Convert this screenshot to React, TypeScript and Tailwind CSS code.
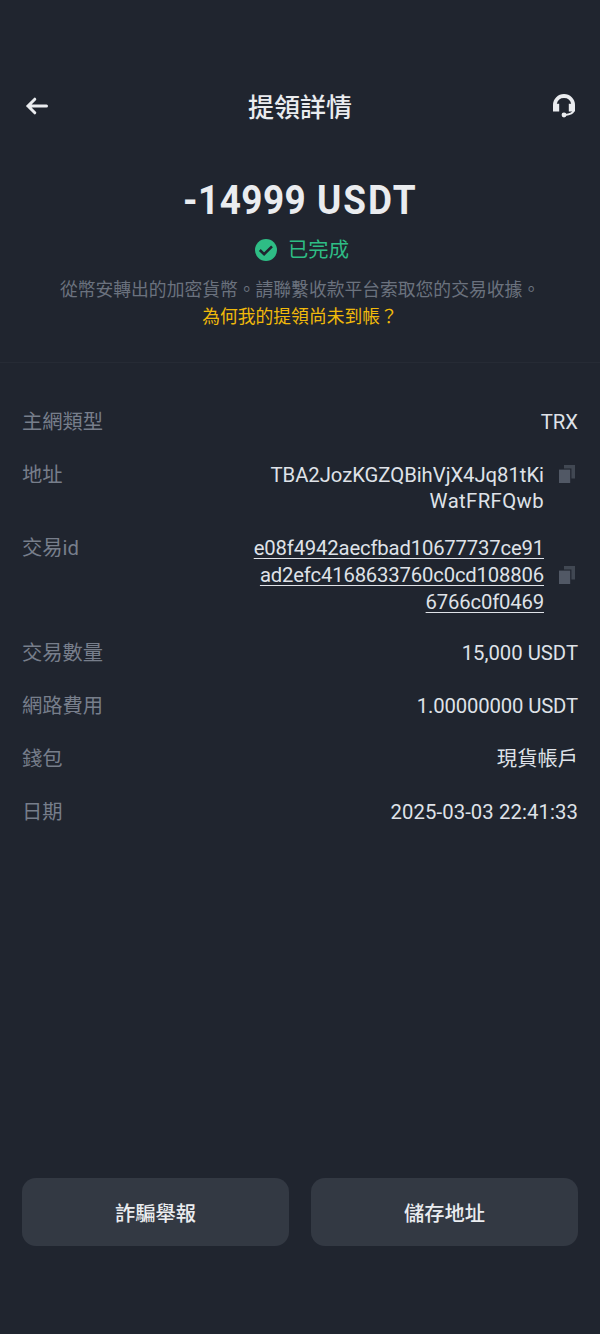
import React from "react";

function BackIcon() {
  return (
    <svg width="24" height="20" viewBox="0 0 24 20" fill="none" stroke="#eaecef" strokeWidth="3" strokeLinecap="round">
      <path d="M4 10H22.500M10.800 3.200L4 10L10.800 16.800" />
    </svg>
  );
}

function HeadsetIcon() {
  return (
    <svg width="24" height="26" viewBox="0 0 24 26" fill="none">
      <path
        d="M1 18.500V12a11 11 0 0 1 22 0v6.500h-6.200V10.800h2.400a7.400 7.400 0 0 0-14.400 0h2.400v7.700z"
        fill="#eaecef"
      />
      <path d="M21.600 17.500c-.6 2.600-3.400 4-8.600 4.400" stroke="#eaecef" strokeWidth="2" />
      <circle cx="12" cy="22" r="2.400" fill="#eaecef" />
    </svg>
  );
}

function CheckIcon() {
  return (
    <svg width="22" height="22" viewBox="0 0 22 22" fill="none">
      <circle cx="11" cy="11" r="11" fill="#2ebd85" />
      <path d="M4.800 11l4.300 4.200 7.900-7.900" stroke="#20252f" strokeWidth="2.600" />
    </svg>
  );
}

function CopyIcon() {
  return (
    <svg width="16" height="18" viewBox="0 0 16 18">
      <path d="M5 0h11v13.500h-3.600V3.600H5z" fill="#414853" />
      <path d="M0 4.600h11.200V18H0z" fill="#515865" />
    </svg>
  );
}

function Row({ label, children }: { label: string; children: React.ReactNode }) {
  return (
    <div className="flex items-start justify-between">
      <span className="text-[#777e8b]">{label}</span>
      <div className="text-right">{children}</div>
    </div>
  );
}

export default function App() {
  return (
    <div className="flex h-[1334px] w-[600px] flex-col bg-[#20252f] font-['Roboto','Noto_Sans_CJK_TC',sans-serif] text-[#dfe2e8]">
      <header className="mt-[88px] flex h-9 items-center justify-between pr-6 pl-6">
        <BackIcon />
        <h1 className="pt-1 text-[26px] leading-9 font-medium text-[#eaecef]">提領詳情</h1>
        <HeadsetIcon />
      </header>

      <section className="flex h-[239px] flex-col items-center border-b border-[#262b35] pt-[51px]">
        <div className="flex h-[50px] scale-x-90 gap-[12px] text-[41px] leading-[50px] font-bold whitespace-nowrap text-[#eaecef]">
          <span className="tracking-[0.5px]">-14999</span>
          <span className="tracking-[2.2px]">USDT</span>
        </div>
        <div className="mt-[11px] flex h-7 items-center gap-[11px] pl-1 text-[20.3px] leading-7 text-[#2ebd85]">
          <CheckIcon />
          <span>已完成</span>
        </div>
        <p className="mt-3 text-[17.8px] leading-[27px] whitespace-nowrap text-[#6b727e]">
          從幣安轉出的加密貨幣。請聯繫收款平台索取您的交易收據。
        </p>
        <a className="text-[17.8px] leading-[27px] text-[#f0b90b]">為何我的提領尚未到帳？</a>
      </section>

      <section className="flex flex-col px-[22px] pt-[46px] text-[20.3px] leading-[26.7px]">
        <Row label="主網類型">
          <span>TRX</span>
        </Row>
        <div className="mt-[26px]">
          <Row label="地址">
            <div className="flex items-start gap-[15px] pr-[3px]">
              <div className="flex flex-col items-end">
                <span className="tracking-[-0.04px]">TBA2JozKGZQBihVjX4Jq81tKi</span>
                <span className="tracking-[0.4px]">WatFRFQwb</span>
              </div>
              <div className="pt-[3px]">
                <CopyIcon />
              </div>
            </div>
          </Row>
        </div>
        <div className="mt-5">
          <Row label="交易id">
            <div className="flex items-center gap-[15px] pr-[3px]">
              <div className="flex flex-col items-end tracking-[-0.17px] underline decoration-1 underline-offset-3">
                <span>e08f4942aecfbad10677737ce91</span>
                <span>ad2efc4168633760c0cd108806</span>
                <span>6766c0f0469</span>
              </div>
              <CopyIcon />
            </div>
          </Row>
        </div>
        <div className="mt-[25px] flex flex-col gap-[26.300px]">
          <Row label="交易數量">
            <span>15,000 USDT</span>
          </Row>
          <Row label="網路費用">
            <span className="tracking-[-0.13px]">1.00000000 USDT</span>
          </Row>
          <Row label="錢包">
            <span>現貨帳戶</span>
          </Row>
          <Row label="日期">
            <span className="tracking-[0.1px]">2025-03-03 22:41:33</span>
          </Row>
        </div>
      </section>

      <footer className="mt-auto mb-[88px] flex gap-[22px] px-[22px] text-[20.3px] font-medium text-[#eaecef]">
        <button className="h-[68px] flex-1 rounded-[14px] bg-[#333943] pt-1">詐騙舉報</button>
        <button className="h-[68px] flex-1 rounded-[14px] bg-[#333943] pt-1">儲存地址</button>
      </footer>
    </div>
  );
}
